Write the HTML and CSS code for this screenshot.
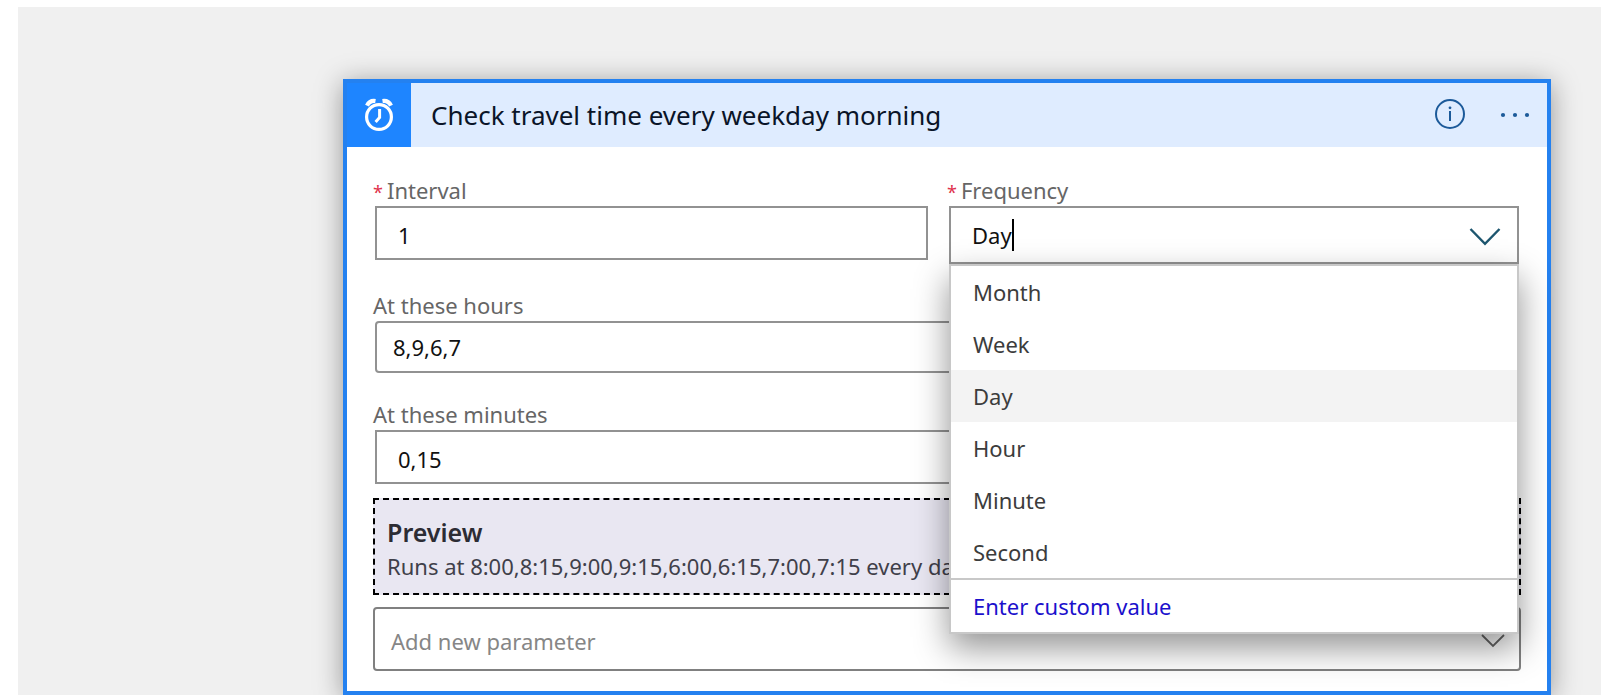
FILE: index.html
```
<!DOCTYPE html>
<html lang="en">
<head>
<meta charset="utf-8">
<title>Check travel time every weekday morning</title>
<link rel="stylesheet" href="styles.css">
</head>
<body>
<main class="canvas">
  <section class="card">
    <header class="card-header">
      <span class="card-icon">
        <svg width="30" height="34" viewBox="0 0 30 34" fill="none" stroke="#fff">
          <circle cx="15" cy="19" r="12.4" stroke-width="3.2"/>
          <path d="M15.6 11v8.500l-4 4.500" stroke-width="3"/>
          <path d="M3 7.600C4.600 4.300 8 2.500 11.500 3" stroke-width="4.200"/>
          <path d="M27 7.600C25.400 4.300 22 2.500 18.500 3" stroke-width="4.200"/>
        </svg>
      </span>
      <h1 class="card-title">Check travel time every weekday morning</h1>
      <button class="icon-button" type="button" aria-label="Information">
        <svg width="32" height="32" viewBox="0 0 32 32" fill="none" stroke="#1c5a9a">
          <circle cx="16" cy="15" r="14" stroke-width="2"/>
          <path d="M16 12v10" stroke-width="2"/>
          <circle cx="16" cy="8.800" r="1.400" fill="#1c5a9a" stroke="none"/>
        </svg>
      </button>
      <button class="icon-button" type="button" aria-label="More options">
        <svg width="32" height="32" viewBox="0 0 32 32" fill="#1c5a9a">
          <circle cx="4" cy="16" r="2.100"/><circle cx="16" cy="16" r="2.100"/><circle cx="28" cy="16" r="2.100"/>
        </svg>
      </button>
    </header>
    <form class="card-body">
      <div class="row">
        <div class="group">
          <label class="label" for="interval"><span class="required">*</span>Interval</label>
          <div class="field field-tall"><input class="input" id="interval" type="text" value="1"></div>
        </div>
        <div class="group">
          <label class="label" for="frequency"><span class="required">*</span>Frequency</label>
          <div class="field combo">
            <input class="input combo-input" id="frequency" type="text" role="combobox" aria-expanded="true" aria-controls="frequency-list" value="Day">
            <span class="caret"></span>
            <svg class="combo-arrow" width="32" height="20" viewBox="0 0 32 20" fill="none" stroke="#1d566f" stroke-width="2.400">
              <path d="M1.500 2L16 16.800L30.500 2"/>
            </svg>
            <div class="menu">
              <ul class="options" id="frequency-list" role="listbox">
                <li class="option" role="option">Month</li>
                <li class="option" role="option">Week</li>
                <li class="option selected" role="option" aria-selected="true">Day</li>
                <li class="option" role="option">Hour</li>
                <li class="option" role="option">Minute</li>
                <li class="option" role="option">Second</li>
              </ul>
              <button class="custom" type="button">Enter custom value</button>
            </div>
          </div>
        </div>
      </div>
      <div class="group">
        <label class="label" for="hours">At these hours</label>
        <div class="field field-hours"><input class="input" id="hours" type="text" value="8,9,6,7"></div>
      </div>
      <div class="group">
        <label class="label" for="minutes">At these minutes</label>
        <div class="field field-tall"><input class="input" id="minutes" type="text" value="0,15"></div>
      </div>
      <div class="preview">
        <h2 class="preview-title">Preview</h2>
        <p class="preview-text">Runs at 8:00,8:15,9:00,9:15,6:00,6:15,7:00,7:15 every day</p>
      </div>
      <button class="add" type="button">
        <span>Add new parameter</span>
        <svg width="24" height="14" viewBox="0 0 24 14" fill="none" stroke="#666" stroke-width="1.800">
          <path d="M1 1L12 12L23 1"/>
        </svg>
      </button>
    </form>
  </section>
</main>
</body>
</html>
```
FILE: styles.css
```
* {
  box-sizing: border-box;
}

body {
  margin: 0;
  padding: 7px 0 0 18px;
  background: #fff;
  font-family: "Noto Sans", "Open Sans", sans-serif;
  font-size: 22px;
  color: #111;
  overflow: hidden;
}

input,
button {
  font: inherit;
  color: inherit;
}

.canvas {
  min-height: calc(100vh - 7px);
  padding: 72px 50px 0 325px;
  background: #f0f0f0;
}

.card {
  border: 4px solid #2481f0;
  background: #fff;
  box-shadow: 0 4px 26px rgba(0, 0, 0, 0.38);
}

.card-header {
  display: flex;
  align-items: center;
  height: 64px;
  padding-right: 16px;
  background: #dfecff;
}

.card-icon {
  display: flex;
  align-items: center;
  justify-content: center;
  width: 64px;
  height: 64px;
  background: #1e85ff;
}

.card-title {
  flex: 1;
  margin: 0;
  padding-left: 20px;
  font-size: 26px;
  line-height: 36px;
  font-weight: 400;
  color: #0a1428;
}

.icon-button {
  display: flex;
  margin-left: 33px;
  padding: 0;
  border: 0;
  background: none;
}

.card-body {
  padding: 27px 26px 20px;
}

.row {
  display: grid;
  grid-template-columns: 557fr 574fr;
  gap: 17px;
}

.group + .group,
.row + .group {
  margin-top: 25px;
}

.row .group {
  margin-top: 0;
}

.label {
  display: block;
  line-height: 32px;
  color: #666;
}

.required {
  margin-right: 4px;
  color: #e0324b;
  font-size: 18px;
  line-height: 1;
}

.field {
  position: relative;
  display: flex;
  align-items: center;
  margin: 0 2px;
  height: 52px;
  padding: 0 21px;
  border: 2px solid #929292;
  background: #fff;
}

.field-tall {
  height: 54px;
  padding-top: 4px;
}

.field-hours {
  padding: 0 16px;
  border-radius: 4px;
}

.input {
  width: 100%;
  min-width: 0;
  padding: 0;
  border: 0;
  outline: 0;
  background: none;
}

.combo {
  height: 58px;
  padding-right: 16px;
}

.combo-input {
  width: 40px;
}

.caret {
  width: 2px;
  height: 32px;
  background: #000;
}

.combo-arrow {
  margin-top: 4px;
  margin-left: auto;
}

.menu {
  position: absolute;
  z-index: 1;
  top: calc(100% + 2px);
  left: -2px;
  right: -2px;
  border: 2px solid #c8c8c8;
  background: #fff;
  box-shadow: 0 14px 32px rgba(0, 0, 0, 0.42);
}

.options {
  margin: 0;
  padding: 0;
  list-style: none;
}

.option {
  padding: 0 22px;
  line-height: 52px;
  color: #3c3c3c;
}

.selected {
  background: #f3f3f3;
}

.custom {
  display: block;
  width: 100%;
  padding: 0 22px;
  border: 0;
  border-top: 2px solid #c8c8c8;
  background: none;
  line-height: 52px;
  text-align: left;
  color: #1b10cc;
}

.preview {
  margin-top: 14px;
  padding: 14px 12px 11px;
  border: 2px dashed #000;
  background: #e9e7f2;
}

.preview-title {
  margin: 0;
  font-size: 25px;
  line-height: 36px;
  font-weight: 600;
  color: #2c2c34;
}

.preview-text {
  margin: 0;
  line-height: 32px;
  color: #40404a;
}

.add {
  display: flex;
  align-items: center;
  justify-content: space-between;
  width: 100%;
  height: 64px;
  margin-top: 12px;
  padding: 4px 14px 0 16px;
  border: 2px solid #808080;
  border-radius: 4px;
  background: #fff;
  color: #868686;
}
```
